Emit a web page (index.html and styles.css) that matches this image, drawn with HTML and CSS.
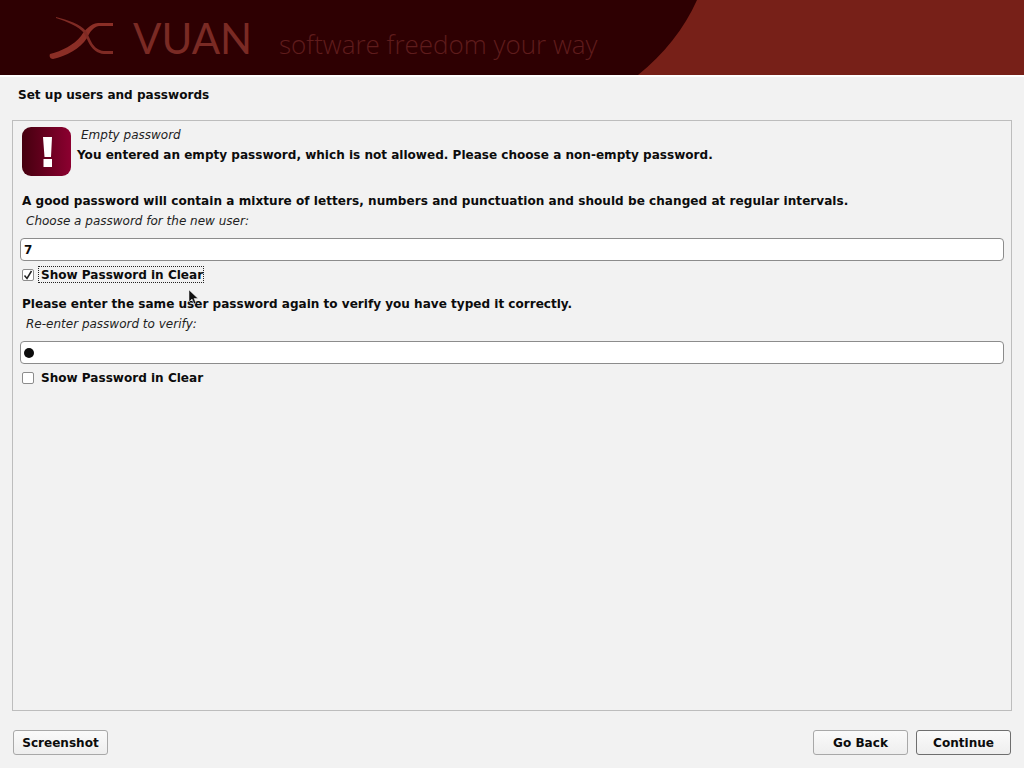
FILE: index.html
```html
<!DOCTYPE html>
<html lang="en">
<head>
<meta charset="utf-8">
<title>Set up users and passwords</title>
<link rel="stylesheet" href="styles.css">
</head>
<body>
<header class="banner">
  <svg class="banner-shape" width="1024" height="75" viewBox="0 0 1024 75" aria-hidden="true">
    <path d="M697 0C684 29 664 54 638 75H1024V0Z" fill="#772018"/>
    <path d="M50 54C62 51 74 45 81 36C85 30 90 24 98 23H113V26H99C93 27 90 32 87 38C80 49 66 56 53 59C50 59 49 56 50 54Z" fill="#8b2e26"/>
    <path d="M56 17C68 20 80 24 86 31C90 37 92 50 104 51H113V54H104C91 53 88 40 84 33C78 26 68 22 56 18Z" fill="#7f2a24"/>
  </svg>
  <span class="brand">VUAN</span>
  <span class="tagline">software freedom your way</span>
</header>
<div class="rule"></div>
<h1 class="title">Set up users and passwords</h1>
<main class="panel">
  <section class="alert">
    <div class="alert-icon">
      <svg width="49" height="49" viewBox="0 0 49 49" aria-hidden="true"><path d="M21 10H30L29 30H22.500ZM21.500 32H30V40H21.500Z" fill="#fff"/></svg>
    </div>
    <div class="alert-text">
      <div class="hint hint-alert">Empty password</div>
      <div class="strong">You entered an empty password, which is not allowed. Please choose a non-empty password.</div>
    </div>
  </section>
  <p class="strong para-first">A good password will contain a mixture of letters, numbers and punctuation and should be changed at regular intervals.</p>
  <div class="hint field-label">Choose a password for the new user:</div>
  <div class="entry">7</div>
  <div class="check-row">
    <span class="box"><svg width="10" height="10" viewBox="0 0 10 10" aria-hidden="true"><path d="M1.500 5.500L4 8.500L8.500 1" fill="none" stroke="#222" stroke-width="1.500"/></svg></span>
    <span class="check-label focused">Show Password in Clear</span>
  </div>
  <p class="strong para-next">Please enter the same user password again to verify you have typed it correctly.</p>
  <div class="hint field-label">Re-enter password to verify:</div>
  <div class="entry"><span class="dot"></span></div>
  <div class="check-row">
    <span class="box"></span>
    <span class="check-label">Show Password in Clear</span>
  </div>
</main>
<footer class="actions">
  <button class="btn" type="button">Screenshot</button>
  <div class="actions-right">
    <button class="btn" type="button">Go Back</button>
    <button class="btn btn-default" type="button">Continue</button>
  </div>
</footer>
<svg class="cursor" width="12" height="16" viewBox="0 0 12 16" aria-hidden="true"><path d="M1 1V13L4 10L6 15L8 14L6 9.500H10Z" fill="#111" stroke="#eee" stroke-width=".5"/></svg>
</body>
</html>
```
FILE: styles.css
```css
* { box-sizing: border-box; }
html, body { margin: 0; height: 768px; overflow: hidden; }
body {
  display: flex;
  flex-direction: column;
  position: relative;
  background: #f2f2f2;
  color: #0c0c0c;
  font-family: "DejaVu Sans", sans-serif;
  font-size: 12.05px;
}
.banner {
  position: relative;
  flex: none;
  height: 75px;
  background: #2e0002;
  display: flex;
  align-items: center;
  overflow: hidden;
}
.banner-shape { position: absolute; left: 0; top: 0; }
.brand {
  position: relative;
  margin-left: 133px;
  width: 121px;
  font-family: "Lato", sans-serif;
  font-weight: 400;
  font-size: 42px;
  line-height: 40px;
  color: #7a2a24;
}
.tagline {
  position: relative;
  margin-left: 25px;
  margin-top: 12px;
  font-family: "Open Sans", sans-serif;
  font-weight: 300;
  font-size: 26px;
  color: #5f1c1c;
}
.rule { flex: none; height: 2px; background: #fff; }
.title {
  flex: none;
  margin: 0;
  padding: 10px 0 0 18px;
  height: 43px;
  font-size: 12.05px;
  line-height: 16px;
  font-weight: 700;
}
.panel {
  flex: 1;
  min-height: 0;
  margin: 0 12px;
  padding: 6px 7px 5px;
  border: 1px solid #bdbdbd;
  display: flex;
  flex-direction: column;
}
.alert { display: flex; height: 49px; padding-left: 2px; }
.alert-icon {
  flex: none;
  width: 49px;
  height: 49px;
  border-radius: 9px;
  background: linear-gradient(90deg, #45000f, #8c0030);
}
.alert-icon svg { display: block; }
.alert-text { margin-left: 6px; }
.hint {
  font-style: italic;
  font-size: 12px;
  line-height: 16px;
  color: #222;
}
.hint-alert { margin-left: 4px; }
.strong { font-weight: 700; line-height: 16px; margin: 0; }
.alert-text .strong { margin-top: 4px; }
.para-first { margin: 17px 0 0 2px; letter-spacing: 0.035px; }
.para-next { margin: 13px 0 0 2px; }
.field-label { margin: 4px 0 0 6px; }
.entry {
  flex: none;
  height: 23px;
  margin-top: 9px;
  padding-left: 3px;
  display: flex;
  align-items: center;
  background: #fff;
  border: 1px solid #8c8c8c;
  border-radius: 4px;
  font-weight: 700;
}
.dot { width: 10px; height: 10px; border-radius: 50%; background: #0c0c0c; }
.check-row {
  flex: none;
  height: 17px;
  margin-top: 5px;
  padding-left: 2px;
  display: flex;
  align-items: center;
}
.box {
  flex: none;
  width: 12px;
  height: 12px;
  background: #fff;
  border: 1px solid #8c8c8c;
  border-radius: 2px;
  display: flex;
  align-items: center;
  justify-content: center;
}
.check-label {
  margin-left: 4px;
  padding: 1px 0 0 2px;
  height: 17px;
  line-height: 14px;
  font-weight: 700;
  border: 1px dotted transparent;
}
.focused { border-color: #222; }
.actions {
  flex: none;
  height: 57px;
  padding: 19px 13px 13px;
  display: flex;
  justify-content: space-between;
}
.actions-right { display: flex; gap: 8px; }
.btn {
  width: 95px;
  height: 25px;
  padding: 0;
  border: 1px solid #a8a8a8;
  border-radius: 3px;
  background: linear-gradient(#fafafa, #eeeeee);
  color: #0c0c0c;
  font-family: "DejaVu Sans", sans-serif;
  font-size: 12.05px;
  font-weight: 700;
}
.btn-default { border-color: #6e6e6e; }
.cursor { position: absolute; left: 188px; top: 289px; }
```
